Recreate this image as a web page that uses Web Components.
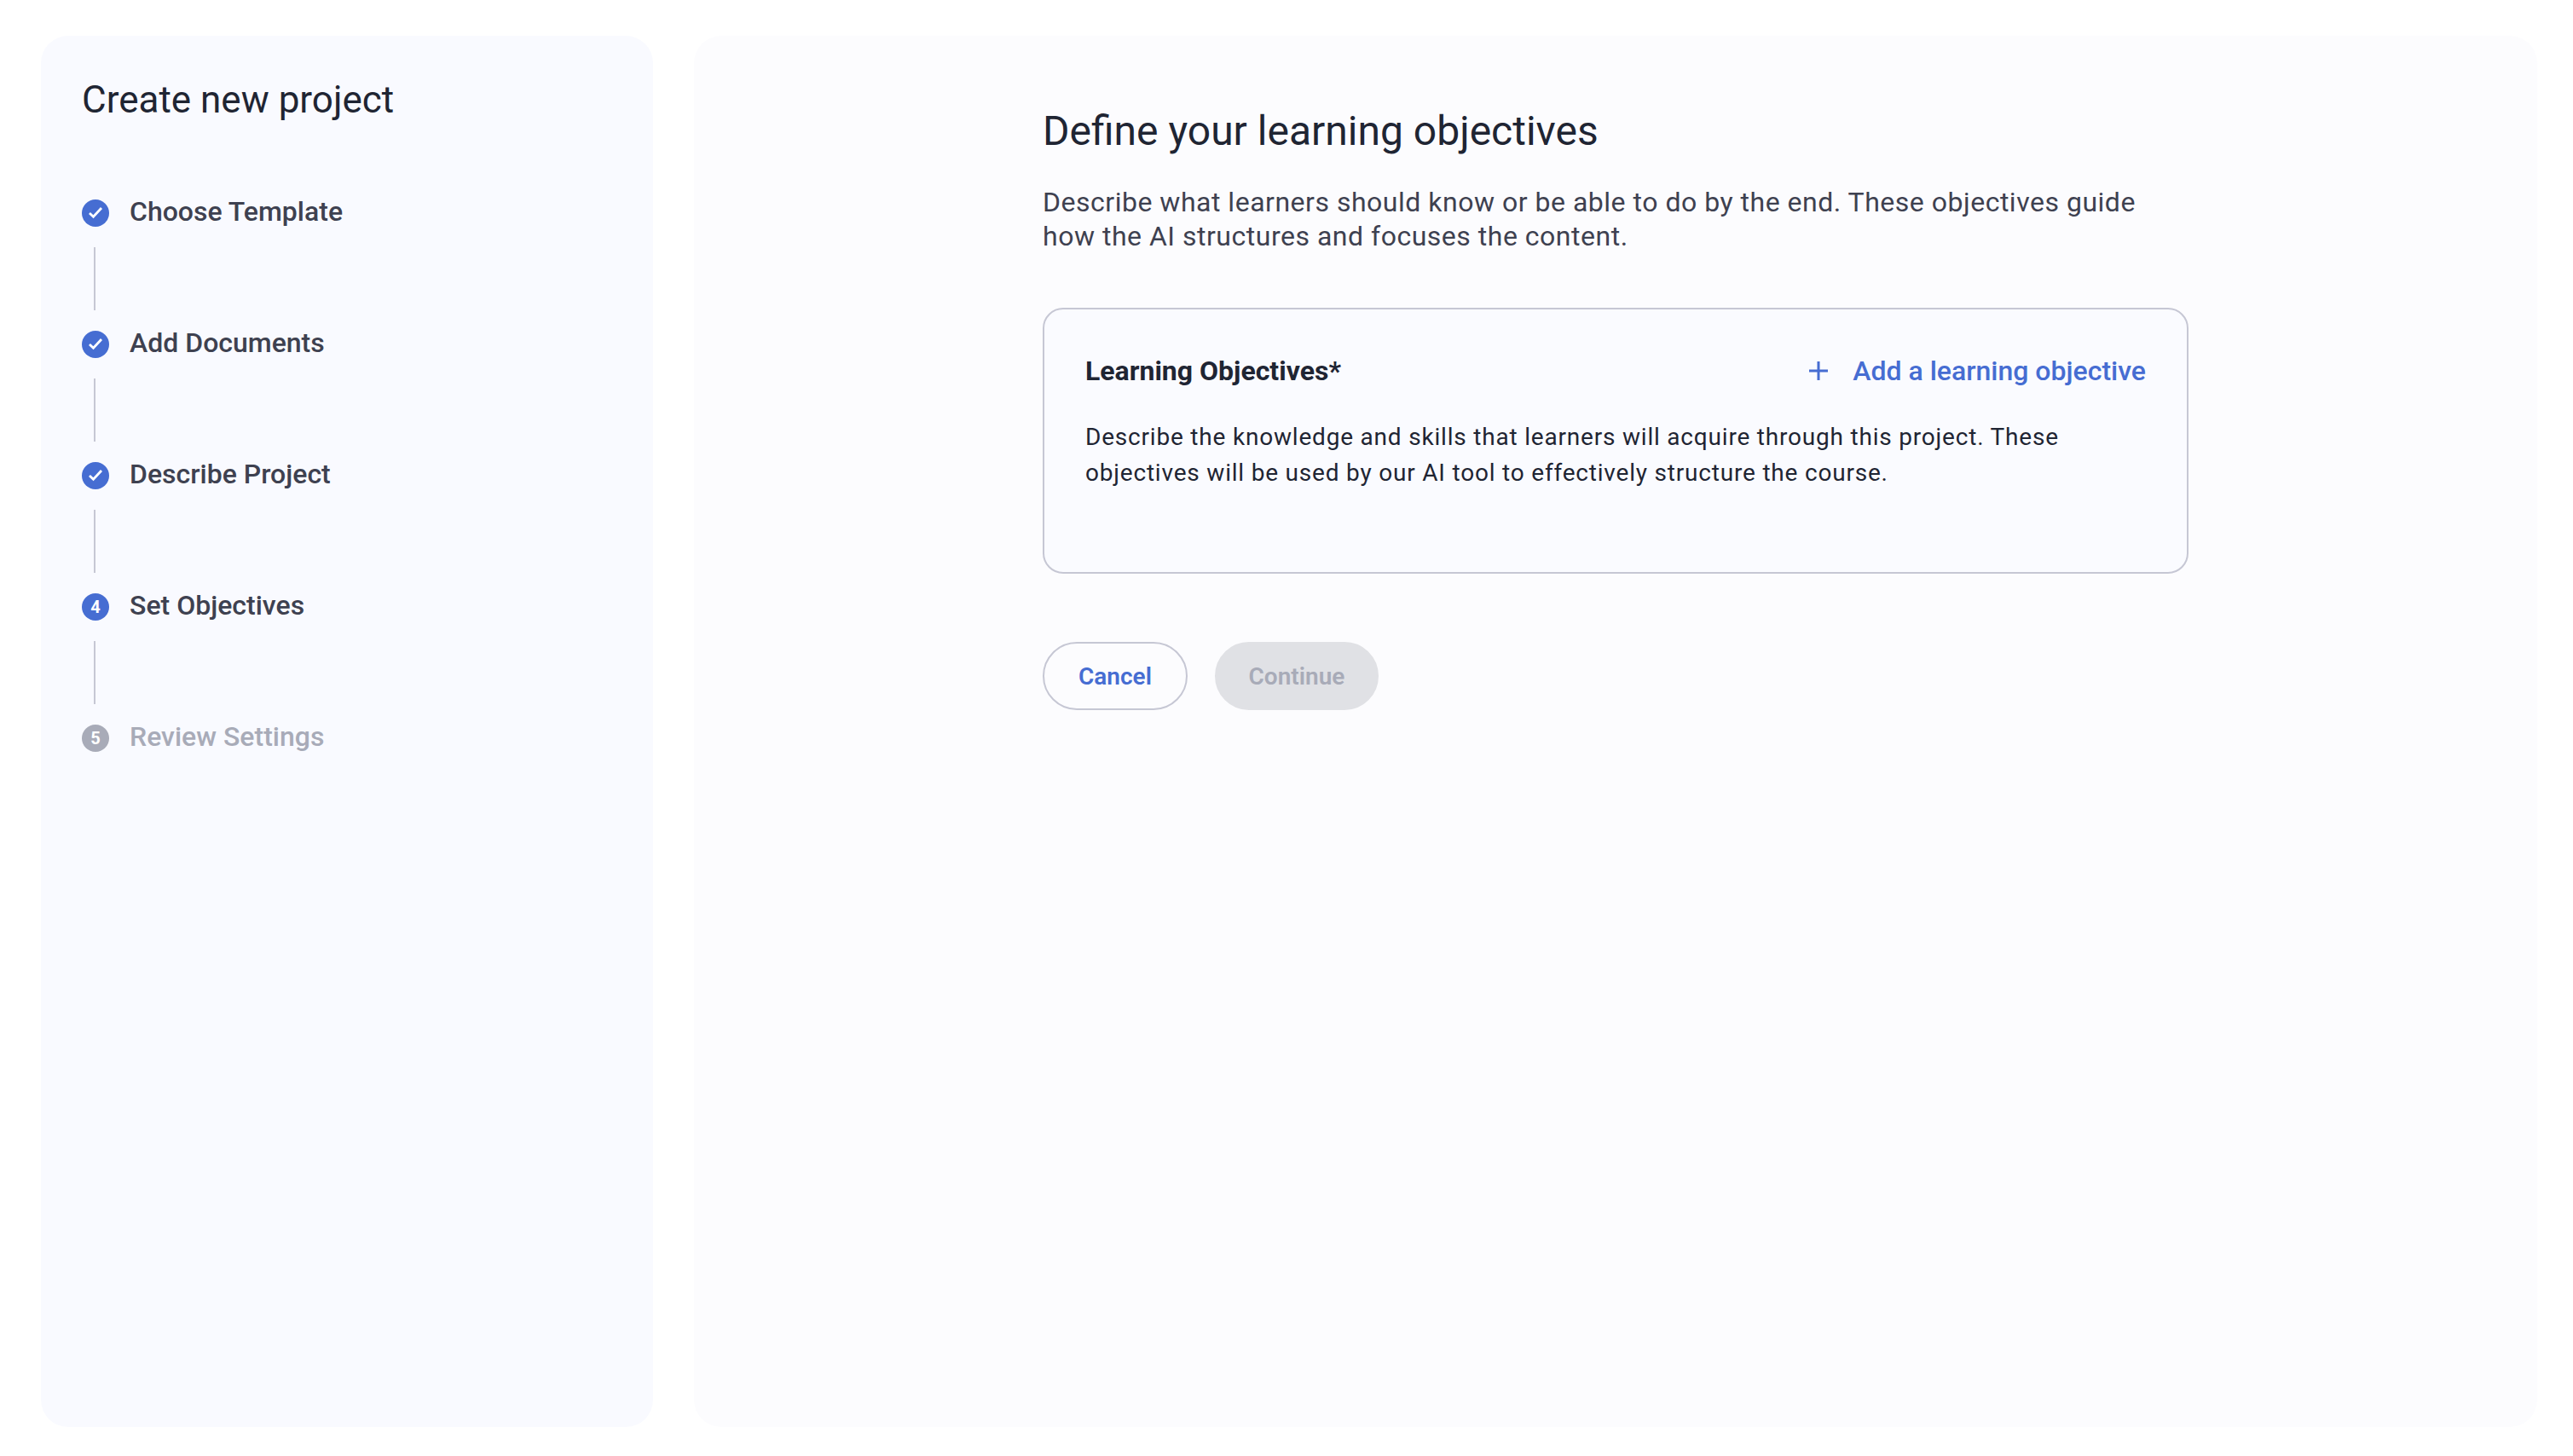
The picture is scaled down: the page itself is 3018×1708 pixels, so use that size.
<!DOCTYPE html>
<html>
<head>
<meta charset="utf-8">
<title>Create new project</title>
<style>
  html, body { margin: 0; height: 100%; background: #fff; }
  body { font-family: Roboto, "Liberation Sans", sans-serif; }
</style>
</head>
<body>
<project-page>
  <step-list slot="side" heading="Create new project">
    <step-item state="done">Choose Template</step-item>
    <step-item state="done">Add Documents</step-item>
    <step-item state="done">Describe Project</step-item>
    <step-item state="current" num="4">Set Objectives</step-item>
    <step-item state="todo" num="5" last>Review Settings</step-item>
  </step-list>
  <objectives-form slot="main"></objectives-form>
</project-page>

<script>
class ProjectPage extends HTMLElement {
  constructor() {
    super();
    this.attachShadow({ mode: 'open' });
    this.shadowRoot.innerHTML = `
    <style>
      :host {
        display: grid;
        grid-template-columns: 718px 2162px;
        gap: 48px;
        box-sizing: border-box;
        height: 1708px;
        padding: 42px 42px 34px 48px;
      }
      .panel { border-radius: 32px; min-height: 0; }
      .side { background: #f9faff; }
      .main { background: #fcfcfe; }
    </style>
    <div class="panel side"><slot name="side"></slot></div>
    <div class="panel main"><slot name="main"></slot></div>
    `;
  }
}

class StepList extends HTMLElement {
  constructor() {
    super();
    this.attachShadow({ mode: 'open' });
    this.shadowRoot.innerHTML = `
    <style>
      :host { display: block; padding: 39px 48px; }
      h2 {
        margin: 0 0 75px;
        font: 400 44px/72px Roboto, sans-serif;
        color: #1f2533;
      }
      .steps { display: flex; flex-direction: column; }
    </style>
    <h2></h2>
    <div class="steps"><slot></slot></div>
    `;
    this.shadowRoot.querySelector('h2').textContent = this.getAttribute('heading');
  }
}

class StepItem extends HTMLElement {
  constructor() {
    super();
    this.attachShadow({ mode: 'open' });
    const state = this.getAttribute('state');
    const num = this.getAttribute('num');
    const mark = state === 'done'
      ? `<svg width="32" height="32" viewBox="0 0 32 32"><path d="M9 16 L13.5 20.2 L23 10" fill="none" stroke="#fff" stroke-width="2.8"/></svg>`
      : `<span>${num}</span>`;
    this.shadowRoot.innerHTML = `
    <style>
      :host { display: block; }
      .row { display: flex; align-items: center; gap: 24px; height: 40px; }
      .dot {
        flex: none;
        width: 32px;
        height: 32px;
        margin-top: 4px;
        border-radius: 50%;
        background: #466dd2;
        color: #fff;
        display: flex;
        align-items: center;
        justify-content: center;
        font: 700 20px/1 Roboto, sans-serif;
      }
      .label {
        font: 500 32px/40px Roboto, sans-serif;
        color: #3e4150;
        white-space: nowrap;
      }
      :host([state="todo"]) .dot { background: #a8abb8; }
      :host([state="todo"]) .label { color: #a8abb8; }
      .line {
        width: 2px;
        height: 74px;
        margin: 22px 0 18px 14px;
        background: #c6c7d4;
      }
      :host([last]) .line { display: none; }
    </style>
    <div class="row"><div class="dot">${mark}</div><div class="label"><slot></slot></div></div>
    <div class="line"></div>
    `;
  }
}

class ObjectivesCard extends HTMLElement {
  constructor() {
    super();
    this.attachShadow({ mode: 'open' });
    this.shadowRoot.innerHTML = `
    <style>
      :host {
        display: block;
        box-sizing: border-box;
        height: 312px;
        padding: 52px 48px 0;
        border: 2px solid #c6c7d4;
        border-radius: 24px;
        background: #fafbff;
      }
      .head { display: flex; justify-content: space-between; align-items: center; height: 40px; }
      h3 { margin: 0; font: 700 32px/40px Roboto, sans-serif; color: #1f2533; }
      .add {
        display: flex;
        align-items: center;
        gap: 28px;
        font: 500 32px/40px Roboto, sans-serif;
        color: #466dd2;
      }
      .add svg { display: block; }
      p {
        margin: 37px 0 0;
        font: 400 28px/42px Roboto, sans-serif;
        letter-spacing: 0.8px;
        color: #1f2533;
      }
    </style>
    <div class="head">
      <h3>Learning Objectives*</h3>
      <div class="add">
        <svg width="24" height="24" viewBox="0 0 24 24"><path d="M12 1 V23 M1 12 H23" fill="none" stroke="#466dd2" stroke-width="3"/></svg>
        <span>Add a learning objective</span>
      </div>
    </div>
    <p><slot></slot></p>
    `;
  }
}

class PillButton extends HTMLElement {
  constructor() {
    super();
    this.attachShadow({ mode: 'open' });
    this.shadowRoot.innerHTML = `
    <style>
      :host {
        display: inline-flex;
        align-items: center;
        justify-content: center;
        box-sizing: border-box;
        height: 80px;
        padding: 1px 40px 0;
        border-radius: 40px;
        border: 2px solid #c6c7d4;
        font: 600 28px/1 Roboto, sans-serif;
        color: #466dd2;
      }
      :host([disabled]) {
        width: 192px;
        padding: 1px 0 0;
        border-color: #e0e1e5;
        background: #e0e1e5;
        color: #a8abb8;
      }
    </style>
    <slot></slot>
    `;
  }
}

class ObjectivesForm extends HTMLElement {
  constructor() {
    super();
    this.attachShadow({ mode: 'open' });
    this.shadowRoot.innerHTML = `
    <style>
      :host { display: block; width: 1344px; margin: 0 auto; padding-top: 82px; }
      h1 {
        margin: 0 0 33px;
        font: 400 48px/60px Roboto, sans-serif;
        color: #1f2533;
      }
      .lead {
        margin: 0 0 64px;
        font: 400 32px/40px Roboto, sans-serif;
        letter-spacing: 0.51px;
        color: #3e4150;
      }
      .actions { display: flex; gap: 32px; margin-top: 80px; }
    </style>
    <h1>Define your learning objectives</h1>
    <p class="lead">Describe what learners should know or be able to do by the end. These objectives guide how the AI structures and focuses the content.</p>
    <objectives-card>Describe the knowledge and skills that learners will acquire through this project. These objectives will be used by our AI tool to effectively structure the course.</objectives-card>
    <div class="actions">
      <pill-button>Cancel</pill-button>
      <pill-button disabled>Continue</pill-button>
    </div>
    `;
  }
}

customElements.define('project-page', ProjectPage);
customElements.define('step-list', StepList);
customElements.define('step-item', StepItem);
customElements.define('objectives-card', ObjectivesCard);
customElements.define('pill-button', PillButton);
customElements.define('objectives-form', ObjectivesForm);
</script>
</body>
</html>
